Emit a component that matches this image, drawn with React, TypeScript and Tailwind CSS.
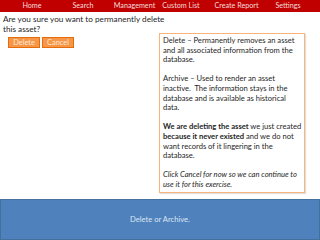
import React from "react";

const font = { fontFamily: "Lato, 'Open Sans', sans-serif" };

const Line = ({ children }: { children?: React.ReactNode }) => (
  <div className="h-[9.6px] leading-[9.6px] whitespace-nowrap">{children}</div>
);

export default function App() {
  const nav: [string, string][] = [
    ["Home", "w-[48px]"],
    ["Search", "w-[54px]"],
    ["Management", "w-[49px]"],
    ["Custom List", "w-[44px]"],
    ["Create Report", "w-[67px]"],
    ["Settings", "w-[36px]"],
  ];
  return (
    <div className="w-[320px] h-[240px] bg-white flex flex-col overflow-hidden" style={font}>
      <div className="h-[12px] bg-[#c00000] flex items-center pl-[8px] text-[#f2dcdb] text-[7.2px] leading-none">
        {nav.map(([t, w]) => (
          <div key={t} className={`${w} whitespace-nowrap flex justify-center`}>
            {t}
          </div>
        ))}
      </div>
      <div className="h-[187px] flex">
        <div className="w-[159px] pl-[3px] pt-[2px] flex flex-col">
          <div className="text-[8.2px] leading-[10px] text-[#262626] whitespace-nowrap">
            <div>Are you sure you want to permanently delete</div>
            <div>this asset?</div>
          </div>
          <div className="flex gap-[2px] pl-[5px] mt-[3px]">
            <div className="w-[32px] h-[11px] bg-[#f79646] border border-[#e46c0a] text-[#fde9d9] text-[7.4px] leading-[9px] text-center">
              Delete
            </div>
            <div className="w-[32px] h-[11px] bg-[#f79646] border border-[#e46c0a] text-[#fde9d9] text-[7.4px] leading-[9px] text-center">
              Cancel
            </div>
          </div>
        </div>
        <div className="mt-[21px] w-[146px] h-[160px] border border-[#f9b47c] shadow-[1px_1px_1px_rgba(0,0,0,0.12)] pl-[3px] pt-[2px] text-[7.6px] text-[#262626]">
          <Line>Delete – Permanently removes an asset</Line>
          <Line>and all associated information from the</Line>
          <Line>database.</Line>
          <Line />
          <Line>Archive – Used to render an asset</Line>
          <Line>inactive.&nbsp; The information stays in the</Line>
          <Line>database and is available as historical</Line>
          <Line>data.</Line>
          <Line />
          <Line>
            <b>We are deleting the asset</b> we just created
          </Line>
          <Line>
            <b>because it never existed</b> and we do not
          </Line>
          <Line>want records of it lingering in the</Line>
          <Line>database.</Line>
          <Line />
          <div className="italic">
            <Line>Click Cancel for now so we can continue to</Line>
            <Line>use it for this exercise.</Line>
          </div>
        </div>
      </div>
      <div className="h-[41px] bg-[#4f81bd] border border-[#41719c] flex items-center justify-center text-[#dbe5f1] text-[7.6px]">
        Delete or Archive.
      </div>
    </div>
  );
}
